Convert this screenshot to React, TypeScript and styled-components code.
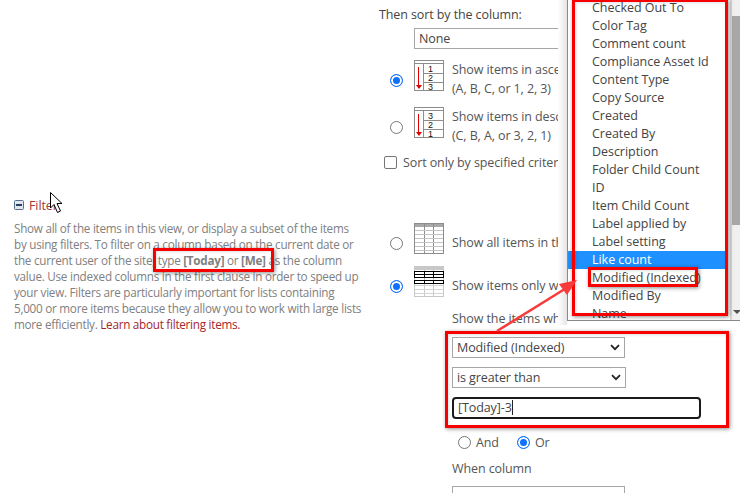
import React from "react";
import styled, { createGlobalStyle } from "styled-components";

const Global = createGlobalStyle`
  html, body { margin: 0; padding: 0; background: #fff; }
  body { font-family: "Open Sans", "Noto Sans", sans-serif; }
`;

const Page = styled.div`
  position: relative;
  width: 740px;
  height: 493px;
  overflow: hidden;
  background: #fff;
  display: grid;
  grid-template-columns: 379px 361px;
  font-size: 12.5px;
  letter-spacing: -0.1px;
  color: #444;
`;

const LeftColumn = styled.section`
  padding: 197px 0 0 14px;
`;

const SectionTitle = styled.div`
  display: flex;
  align-items: center;
  gap: 5px;
  height: 16px;
  color: #a4373a;
  font-size: 12.5px;
`;

const Description = styled.p`
  margin: 7px 0 0;
  color: #808080;
  font-size: 11.7px;
  letter-spacing: -0.26px;
  line-height: 16px;
  white-space: nowrap;
  strong { font-weight: 700; }
`;

const LearnLink = styled.a`
  color: #a4262c;
`;

const RightColumn = styled.section`
  display: flex;
  flex-direction: column;
  padding-top: 7px;
  color: #555;
  white-space: nowrap;
`;

const Heading = styled.div`
  height: 16px;
  line-height: 16px;
  color: #444;
`;

const NoneBox = styled.div`
  box-sizing: border-box;
  margin: 5px 0 0 35px;
  width: 200px;
  height: 21px;
  padding-left: 4px;
  line-height: 20px;
  border: 1px solid #a6a6a6;
  color: #444;
`;

const OptionRow = styled.div<{ $top: number }>`
  display: flex;
  align-items: center;
  height: 31px;
  margin-top: ${(p) => p.$top}px;
`;

const RadioSlot = styled.div`
  width: 35px;
  display: flex;
  justify-content: center;
  padding-top: 10px;
`;

const RadioMark = styled.span<{ $on?: boolean }>`
  box-sizing: border-box;
  display: block;
  flex: none;
  width: 13px;
  height: 13px;
  border-radius: 50%;
  border: ${(p) => (p.$on ? "1px solid #0f6fff" : "1px solid #767676")};
  background: ${(p) => (p.$on ? "#0f6fff" : "#fff")};
  box-shadow: ${(p) => (p.$on ? "inset 0 0 0 2px #fff" : "none")};
`;

const IconSlot = styled.div`
  width: 38px;
  height: 31px;
  flex: none;
`;

const OptionText = styled.div`
  line-height: 19px;
  padding-top: 7px;
`;

const CheckRow = styled.label`
  display: flex;
  align-items: center;
  gap: 6px;
  height: 14px;
  margin: 17px 0 0 5px;
`;

const CheckMark = styled.span`
  box-sizing: border-box;
  width: 13px;
  height: 13px;
  border: 1px solid #767676;
  border-radius: 2px;
  background: #fff;
`;

const FieldStack = styled.div`
  margin: 14px 0 0 73px;
  display: flex;
  flex-direction: column;
  align-items: flex-start;
`;

const FieldLabel = styled.div<{ $top?: number }>`
  height: 16px;
  line-height: 16px;
  margin-top: ${(p) => p.$top ?? 0}px;
`;

const SelectBox = styled.div<{ $width: number; $top: number }>`
  box-sizing: border-box;
  width: ${(p) => p.$width}px;
  height: 21px;
  margin-top: ${(p) => p.$top}px;
  padding: 0 4px;
  border: 1px solid #a6a6a6;
  display: flex;
  align-items: center;
  justify-content: space-between;
  color: #444;
  background: #fff;
`;

const TextEntry = styled.div`
  box-sizing: border-box;
  width: 249px;
  height: 22px;
  margin-top: 9px;
  padding: 0 4px;
  border: 2px solid #1a1a1a;
  border-radius: 4px;
  line-height: 18px;
  color: #444;
`;

const Caret = styled.span`
  display: inline-block;
  width: 1px;
  height: 15px;
  background: #222;
  vertical-align: -3px;
`;

const ConjunctionRow = styled.div`
  display: flex;
  align-items: center;
  height: 16px;
  margin: 15px 0 0 6px;
`;

const Conjunction = styled.span`
  display: flex;
  align-items: center;
  gap: 5px;
  width: 59px;
`;

const Dropdown = styled.aside`
  position: absolute;
  left: 567px;
  top: 0;
  width: 173px;
  height: 321px;
  box-sizing: border-box;
  background: #fff;
  border-left: 1px solid #8a8a8a;
  border-bottom: 1px solid #8a8a8a;
  display: grid;
  grid-template-columns: 1fr 10px;
  &::before {
    content: "";
    position: absolute;
    left: -10px;
    top: 0;
    bottom: -5px;
    width: 9px;
    background: linear-gradient(to right, #fff, #e4e4e4);
  }
  &::after {
    content: "";
    position: absolute;
    left: -1px;
    right: 0;
    top: 100%;
    height: 5px;
    margin-top: 1px;
    background: #fff;
  }
`;

const OptionList = styled.div`
  height: 320px;
  overflow: hidden;
  margin-top: -1px;
`;

const ListItem = styled.div<{ $active?: boolean }>`
  height: 18px;
  line-height: 18px;
  padding-left: 24px;
  margin-right: 5px;
  letter-spacing: -0.04px;
  background: ${(p) => (p.$active ? "#1e90ff" : "transparent")};
  color: ${(p) => (p.$active ? "#fff" : "#444")};
`;

const Track = styled.div`
  position: relative;
  background: #f0f0f0;
  border-left: 2px solid #d8d8d8;
`;

const Thumb = styled.div`
  position: absolute;
  left: 0;
  right: 0;
  top: 16px;
  height: 209px;
  background: #a8a8a8;
`;

const DownArrow = styled.div`
  position: absolute;
  left: 1px;
  bottom: 6px;
  width: 0;
  height: 0;
  border-left: 4px solid transparent;
  border-right: 4px solid transparent;
  border-top: 4px solid #505050;
`;

const Callout = styled.div<{ $l: number; $t: number; $w: number; $h: number }>`
  position: absolute;
  box-sizing: border-box;
  left: ${(p) => p.$l}px;
  top: ${(p) => p.$t}px;
  width: ${(p) => p.$w}px;
  height: ${(p) => p.$h}px;
  border: 3px solid #f70000;
  box-shadow: 1px 1px 4px rgba(0, 0, 0, 0.45), inset 1px 1px 3px rgba(0, 0, 0, 0.12);
  pointer-events: none;
`;

const Overlay = styled.svg`
  position: absolute;
  left: 0;
  top: 0;
  pointer-events: none;
`;

const CollapseIcon = () => (
  <svg width="10" height="10" viewBox="0 0 10 10">
    <rect x="0.5" y="0.5" width="9" height="9" rx="1" fill="#dfe6f0" stroke="#5a6f8c" />
    <rect x="2" y="4" width="6" height="2" fill="#2a3f5c" />
  </svg>
);

const Chevron = () => (
  <svg width="10" height="7" viewBox="0 0 10 7">
    <path d="M1 1.2 L5 5.2 L9 1.2" fill="none" stroke="#222" strokeWidth="1.8" />
  </svg>
);

const SortIcon = ({ digits }: { digits: string[] }) => (
  <svg width="30" height="31" viewBox="0 0 30 31">
    <g shapeRendering="crispEdges">
      <rect x="0.5" y="0.5" width="29" height="30" fill="#fff" stroke="#8c8c8c" />
      <path d="M0 3.5H30M9.5 3.5V30.5M9.5 13.5H30M9.5 22.5H30" stroke="#8c8c8c" fill="none" />
      <path d="M4.5 7V26" stroke="#e00000" strokeWidth="1" />
    </g>
    <path d="M2 25H8L5 29Z" fill="#e00000" />
    {digits.map((d, i) => (
      <text key={d} x="14" y={12 + i * 9} fontSize="9" fill="#111" letterSpacing="0" fontFamily="Liberation Sans, sans-serif">
        {d}
      </text>
    ))}
  </svg>
);

const GridIcon = () => (
  <svg width="30" height="31" viewBox="0 0 30 31" shapeRendering="crispEdges">
    <rect x="0.5" y="0.5" width="29" height="30" fill="#fff" stroke="#8c8c8c" />
    <rect x="1" y="1" width="28" height="3" fill="#a8a8a8" />
    <path d="M10.5 1V30M19.5 1V30" stroke="#8c8c8c" />
    <path d="M1 7.5H29M1 11.5H29M1 15.5H29M1 19.5H29M1 23.5H29M1 27.5H29" stroke="#c4c4c4" />
  </svg>
);

const FilterGridIcon = () => (
  <svg width="30" height="31" viewBox="0 0 30 31" shapeRendering="crispEdges">
    <rect x="0.5" y="0.5" width="29" height="30" fill="#fff" stroke="#c8c8c8" />
    <rect x="1" y="1" width="28" height="3" fill="#c8c8c8" />
    <path d="M10.5 1V30M19.5 1V30" stroke="#c8c8c8" />
    <path d="M1 19.5H29M1 23.5H29M1 27.5H29" stroke="#d4d4d4" />
    <path d="M0.5 5.5H29.5V11.5H0.5ZM0.5 8.5H29.5M0.5 14.5H29.5V17.5H0.5ZM10.5 5.5V11.5M19.5 5.5V11.5M10.5 14.5V17.5M19.5 14.5V17.5" fill="none" stroke="#000" />
  </svg>
);

const fields = [
  "Checked Out To", "Color Tag", "Comment count", "Compliance Asset Id", "Content Type",
  "Copy Source", "Created", "Created By", "Description", "Folder Child Count", "ID",
  "Item Child Count", "Label applied by", "Label setting", "Like count", "Modified (Indexed)",
  "Modified By", "Name",
];

export default function App() {
  return (
    <Page>
      <Global />
      <LeftColumn>
        <SectionTitle>
          <CollapseIcon />
          Filter
        </SectionTitle>
        <Description>
          Show all of the items in this view, or display a subset of the items
          <br />
          by using filters. To filter on a column based on the current date or
          <br />
          the current user of the site, type <strong>[Today]</strong> or <strong>[Me]</strong> as the column
          <br />
          value. Use indexed columns in the first clause in order to speed up
          <br />
          your view. Filters are particularly important for lists containing
          <br />
          5,000 or more items because they allow you to work with large lists
          <br />
          more efficiently. <LearnLink>Learn about filtering items.</LearnLink>
        </Description>
      </LeftColumn>

      <RightColumn>
        <Heading>Then sort by the column:</Heading>
        <NoneBox>None</NoneBox>
        <OptionRow $top={11}>
          <RadioSlot><RadioMark $on /></RadioSlot>
          <IconSlot><SortIcon digits={["1", "2", "3"]} /></IconSlot>
          <OptionText>Show items in ascending order<br />(A, B, C, or 1, 2, 3)</OptionText>
        </OptionRow>
        <OptionRow $top={16}>
          <RadioSlot><RadioMark /></RadioSlot>
          <IconSlot><SortIcon digits={["3", "2", "1"]} /></IconSlot>
          <OptionText>Show items in descending order<br />(C, B, A, or 3, 2, 1)</OptionText>
        </OptionRow>
        <CheckRow>
          <CheckMark />
          Sort only by specified criteria
        </CheckRow>
        <OptionRow $top={54}>
          <RadioSlot><RadioMark /></RadioSlot>
          <IconSlot><GridIcon /></IconSlot>
          <OptionText>Show all items in this view</OptionText>
        </OptionRow>
        <OptionRow $top={12}>
          <RadioSlot><RadioMark $on /></RadioSlot>
          <IconSlot><FilterGridIcon /></IconSlot>
          <OptionText>Show items only when the following is true:</OptionText>
        </OptionRow>
        <FieldStack>
          <FieldLabel>Show the items when column</FieldLabel>
          <SelectBox $width={173} $top={10}>Modified (Indexed)<Chevron /></SelectBox>
          <SelectBox $width={174} $top={9}>is greater than<Chevron /></SelectBox>
          <TextEntry>[Today]-3<Caret /></TextEntry>
          <ConjunctionRow>
            <Conjunction><RadioMark />And</Conjunction>
            <Conjunction><RadioMark $on />Or</Conjunction>
          </ConjunctionRow>
          <FieldLabel $top={11}>When column</FieldLabel>
          <SelectBox $width={173} $top={9} />
        </FieldStack>
      </RightColumn>

      <Dropdown>
        <OptionList>
          {fields.map((f) => (
            <ListItem key={f} $active={f === "Like count"}>{f}</ListItem>
          ))}
        </OptionList>
        <Track>
          <Thumb />
          <DownArrow />
        </Track>
      </Dropdown>

      <Callout $l={572} $t={-1} $w={156} $h={317} />
      <Callout $l={588} $t={267} $w={110} $h={20} />
      <Callout $l={445} $t={331} $w={284} $h={97} />
      <Callout $l={153} $t={248} $w={121} $h={24} />

      <Overlay width="740" height="493" viewBox="0 0 740 493">
        <path d="M497 331 L568 287" stroke="#f83a3a" strokeWidth="2.5" fill="none" />
        <path d="M577 280 L559 284 L567 295 Z" fill="#f83a3a" />
        <path
          d="M50.5 192.5 V208 L54 204.5 L57.5 212.5 L60.5 211 L57 203.5 L62 203.5 Z"
          fill="#fff"
          stroke="#000"
          strokeWidth="1"
        />
      </Overlay>
    </Page>
  );
}
